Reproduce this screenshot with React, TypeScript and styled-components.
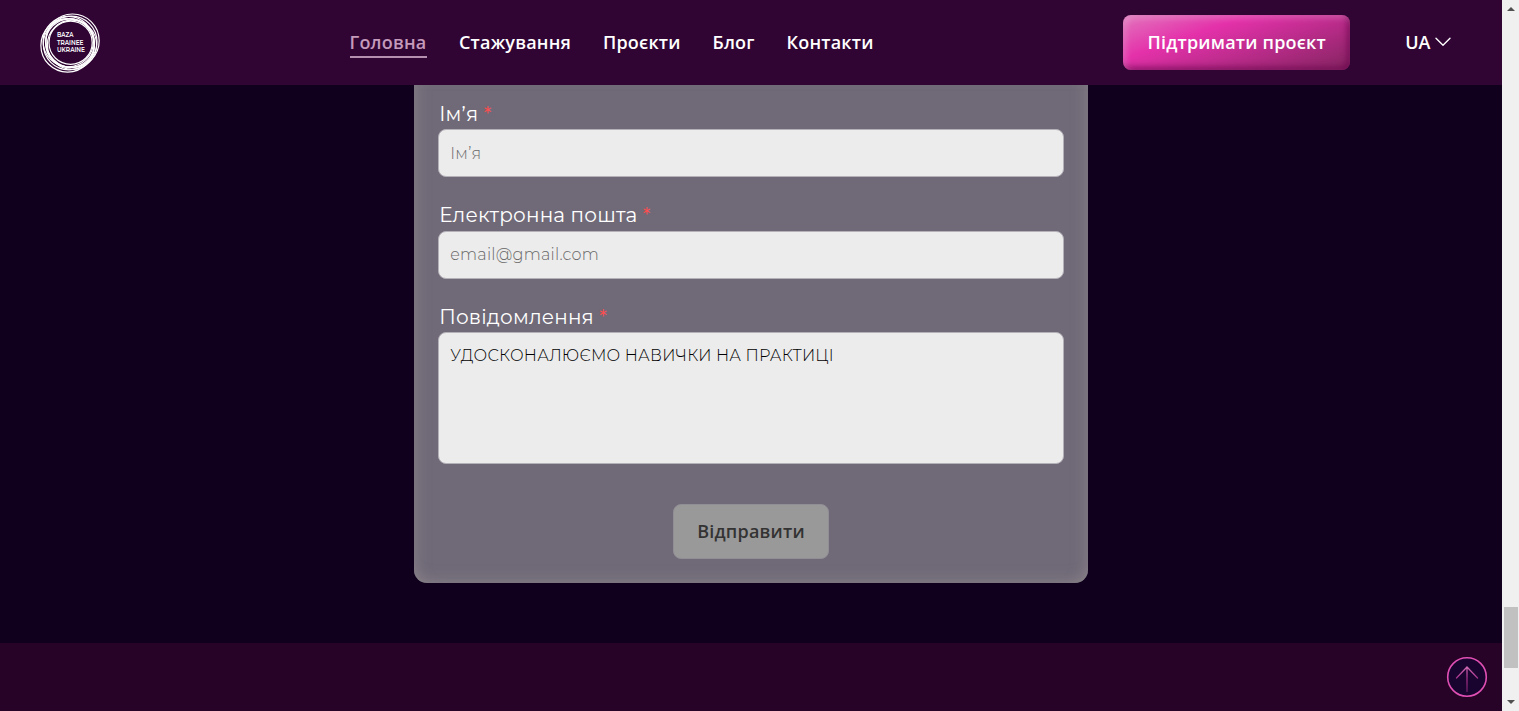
import React from 'react';
import styled, { createGlobalStyle } from 'styled-components';

const GlobalStyle = createGlobalStyle`
  *, *::before, *::after { box-sizing: border-box; }
  body { margin: 0; overflow: hidden; background: #10001d; }
`;

const Screen = styled.div`
  display: flex;
  width: 100%;
  height: 711px;
  overflow: hidden;
  font-family: 'Open Sans', 'Noto Sans', sans-serif;
`;

const Page = styled.div`
  position: relative;
  display: flex;
  flex-direction: column;
  flex: 1;
  min-width: 0;
  background: #10001d;
`;

const Header = styled.header`
  display: flex;
  align-items: center;
  height: 85px;
  flex: none;
  padding: 0 51.5px 0 40px;
  background: #300534;
`;

const Nav = styled.nav`
  display: flex;
  gap: 32px;
  margin-left: 249.5px;
`;

const NavLink = styled.a<{ $active?: boolean; $width: number }>`
  width: ${(p) => p.$width}px;
  height: 30px;
  padding-top: 0;
  border-bottom: 2px solid ${(p) => (p.$active ? '#b58fb0' : 'transparent')};
  color: ${(p) => (p.$active ? '#c59abb' : '#fff')};
  font-size: 18px;
  font-weight: 600;
  letter-spacing: 0.2px;
  line-height: 28px;
  white-space: nowrap;
`;

const SupportButton = styled.button`
  width: 227px;
  height: 55px;
  margin: 0 55px 0 auto;
  padding: 0 0 1px;
  border: 0;
  border-radius: 8px;
  background: linear-gradient(161deg, #e276bd 0%, #e431aa 33%, #832460 100%);
  box-shadow: inset 3px 3px 6px rgba(255, 255, 255, 0.22), inset -3px -3px 6px rgba(105, 0, 75, 0.65);
  color: #fff;
  font: 600 18px/28px 'Open Sans', 'Noto Sans', sans-serif;
  letter-spacing: 0.2px;
  white-space: nowrap;
`;

const Language = styled.div`
  display: flex;
  align-items: center;
  gap: 4px;
  padding-bottom: 1px;
  color: #fff;
  font-size: 18px;
  font-weight: 600;
  line-height: 28px;
`;

const Content = styled.main`
  display: flex;
  justify-content: center;
  height: 558px;
  flex: none;
`;

const FormCard = styled.form`
  display: flex;
  flex-direction: column;
  width: 673.5px;
  height: 498px;
  padding: 15px 24px 0;
  border-radius: 0 0 13px 13px;
  background: #706a78;
  box-shadow: inset 13px 0 14px -10px rgba(145, 138, 143, 0.55),
    inset -13px 0 14px -10px rgba(145, 138, 143, 0.55),
    inset 0 -13px 14px -10px rgba(145, 138, 143, 0.55);
`;

const Field = styled.div<{ $height: number }>`
  display: flex;
  flex-direction: column;
  flex: none;
  height: ${(p) => p.$height}px;
`;

const Label = styled.label<{ $lift?: boolean }>`
  height: 29px;
  flex: none;
  padding-left: 1px;
  color: #fff;
  font: 400 20px/${(p) => (p.$lift ? 27 : 29)}px Montserrat, Inter, sans-serif;
  letter-spacing: 0.18px;
  white-space: nowrap;
`;

const Required = styled.span`
  color: #ff4d4f;
`;

const Input = styled.input<{ $lift?: boolean }>`
  width: 100%;
  height: 48px;
  padding: 0 11px ${(p) => (p.$lift ? 2 : 0)}px;
  border: 1px solid #b5b1b8;
  border-radius: 8px;
  background: #ececec;
  font: 300 16px/24px Montserrat, Inter, sans-serif;
  letter-spacing: 0.25px;
  outline: 0;
  &::placeholder { color: #686868; opacity: 1; }
`;

const Message = styled.textarea`
  width: 100%;
  height: 132px;
  padding: 11px;
  border: 1px solid #b5b1b8;
  border-radius: 8px;
  background: #ececec;
  color: #000;
  font: 300 16px/24px Montserrat, Inter, sans-serif;
  letter-spacing: 0.2px;
  resize: none;
  outline: 0;
`;

const SubmitButton = styled.button`
  align-self: center;
  width: 155.5px;
  height: 55px;
  flex: none;
  padding: 0 0 2px;
  border: 1px solid #928e95;
  border-radius: 8px;
  background: #999;
  color: #333;
  font: 600 18px/28px 'Open Sans', 'Noto Sans', sans-serif;
  letter-spacing: 0.2px;
`;

const Footer = styled.footer`
  flex: 1;
  background: #270328;
`;

const BackToTop = styled.button`
  position: absolute;
  right: 14px;
  bottom: 13px;
  width: 42px;
  height: 42px;
  padding: 0;
  border: 0;
  background: none;
  svg { display: block; }
`;

const Scrollbar = styled.div`
  display: flex;
  flex-direction: column;
  align-items: center;
  justify-content: space-between;
  width: 17px;
  flex: none;
  padding: 7px 0 7px;
  background: #f0f0f0;
`;

const ScrollThumb = styled.div`
  width: 14px;
  height: 61px;
  margin: auto 0 32px;
  background: #c1c1c1;
`;

const rings = [
  { x: 27.6, y: 32.4, r: 26.7 },
  { x: 28.9, y: 31.2, r: 25.6 },
  { x: 30, y: 30.2, r: 24.4 },
  { x: 32.5, y: 27.7, r: 26.7 },
  { x: 31.4, y: 28.8, r: 25.6 },
  { x: 32, y: 31.8, r: 24.6 },
  { x: 28.3, y: 28.6, r: 25.2 },
  { x: 30.6, y: 29.7, r: 21.6 },
];

const Logo = () => (
  <svg width="60" height="60" viewBox="0 0 60 60" role="img">
    <g fill="none" stroke="#fff" strokeWidth="1.2">
      {rings.map((ring) => (
        <circle key={`${ring.x}-${ring.y}`} cx={ring.x} cy={ring.y} r={ring.r} />
      ))}
    </g>
    <g fill="#fff" fontFamily="Montserrat, Inter, sans-serif" fontSize="6.4" fontWeight="600">
      <text x="17" y="24.3" textLength="16.5" lengthAdjust="spacingAndGlyphs">BAZA</text>
      <text x="17" y="31.8" textLength="26.5" lengthAdjust="spacingAndGlyphs">TRAINEE</text>
      <text x="17" y="39.3" textLength="28" lengthAdjust="spacingAndGlyphs">UKRAINE</text>
    </g>
  </svg>
);

const App = () => (
  <>
    <GlobalStyle />
    <Screen>
      <Page>
        <Header>
          <Logo />
          <Nav>
            <NavLink $active $width={77.5}>Головна</NavLink>
            <NavLink $width={112}>Стажування</NavLink>
            <NavLink $width={77.5}>Проєкти</NavLink>
            <NavLink $width={42}>Блог</NavLink>
            <NavLink $width={87}>Контакти</NavLink>
          </Nav>
          <SupportButton type="button">Підтримати проєкт</SupportButton>
          <Language>
            UA
            <svg width="16" height="10" viewBox="0 0 16 10" fill="none" stroke="#fff" strokeWidth="1.4" strokeLinecap="round" strokeLinejoin="round">
              <path d="M1 1.2 8 8.2 15 1.2" />
            </svg>
          </Language>
        </Header>
        <Content>
          <FormCard>
            <Field $height={102}>
              <Label>Ім’я <Required>*</Required></Label>
              <Input placeholder="Ім’я" />
            </Field>
            <Field $height={101}>
              <Label $lift>Електронна пошта <Required>*</Required></Label>
              <Input $lift placeholder="email@gmail.com" />
            </Field>
            <Field $height={201}>
              <Label>Повідомлення <Required>*</Required></Label>
              <Message defaultValue="УДОСКОНАЛЮЄМО НАВИЧКИ НА ПРАКТИЦІ" />
            </Field>
            <SubmitButton type="button">Відправити</SubmitButton>
          </FormCard>
        </Content>
        <Footer />
        <BackToTop type="button">
          <svg width="42" height="42" viewBox="0 0 42 42" fill="none">
            <defs>
              <linearGradient id="arrow" x1="0" y1="11" x2="0" y2="36" gradientUnits="userSpaceOnUse">
                <stop stopColor="#d16bb5" />
                <stop offset="0.45" stopColor="#a33088" />
                <stop offset="1" stopColor="#6d1c62" />
              </linearGradient>
            </defs>
            <circle cx="21" cy="21" r="19.3" fill="#18042f" stroke="#e04fb3" strokeWidth="1.6" />
            <path d="M21 35.5V11M10.5 22 21 11 31.5 22" stroke="url(#arrow)" strokeWidth="1.3" strokeLinecap="round" strokeLinejoin="round" />
          </svg>
        </BackToTop>
      </Page>
      <Scrollbar>
        <svg width="8" height="4" viewBox="0 0 8 4"><path d="M0 4 4 0 8 4Z" fill="#505050" /></svg>
        <ScrollThumb />
        <svg width="8" height="4" viewBox="0 0 8 4"><path d="M0 0 4 4 8 0Z" fill="#505050" /></svg>
      </Scrollbar>
    </Screen>
  </>
);

export default App;
